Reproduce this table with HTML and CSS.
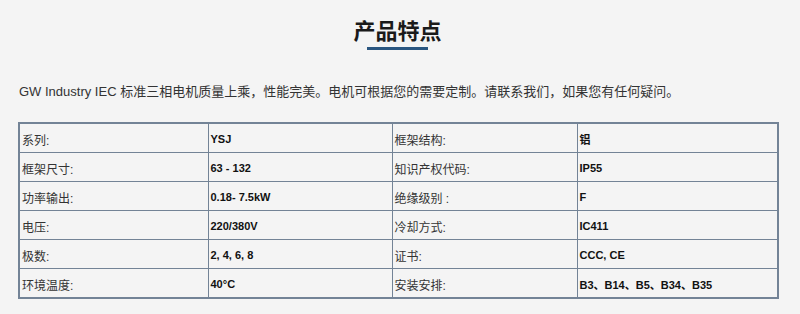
FILE: index.html
```html
<!DOCTYPE html>
<html lang="zh-CN">
<head>
<meta charset="utf-8">
<title>产品特点</title>
<link rel="stylesheet" href="styles.css">
</head>
<body>
<div class="page">
  <div class="head">
    <h2 class="title">产品特点</h2>
    <div class="bar"></div>
  </div>
  <p class="intro">GW Industry IEC 标准三相电机质量上乘，性能完美。电机可根据您的需要定制。请联系我们，如果您有任何疑问。</p>
  <table class="spec">
    <colgroup>
      <col class="c1"><col class="c2"><col class="c3"><col class="c4">
    </colgroup>
    <tr><td>系列:</td><td class="v">YSJ</td><td>框架结构:</td><td class="v">铝</td></tr>
    <tr><td>框架尺寸:</td><td class="v">63 - 132</td><td>知识产权代码:</td><td class="v">IP55</td></tr>
    <tr><td>功率输出:</td><td class="v">0.18- 7.5kW</td><td>绝缘级别 :</td><td class="v">F</td></tr>
    <tr><td>电压:</td><td class="v">220/380V</td><td>冷却方式:</td><td class="v">IC411</td></tr>
    <tr><td>极数:</td><td class="v">2, 4, 6, 8</td><td>证书:</td><td class="v">CCC, CE</td></tr>
    <tr><td>环境温度:</td><td class="v">40°C</td><td>安装安排:</td><td class="v">B3、B14、B5、B34、B35</td></tr>
  </table>
</div>
</body>
</html>
```
FILE: styles.css
```css
html, body {
  margin: 0;
  padding: 0;
  background: #f4f4f4;
}
body {
  font-family: "Liberation Sans", Arial, "Noto Sans CJK SC", sans-serif;
  color: #333;
}
.page {
  width: 795px;
  padding-top: 14px;
}
.head {
  display: flex;
  flex-direction: column;
  align-items: center;
}
.title {
  margin: 0;
  font-size: 22px;
  line-height: 30px;
  font-weight: bold;
  color: #1a1a1a;
  font-family: "Noto Sans CJK SC", sans-serif;
}
.bar {
  width: 61px;
  height: 3px;
  margin-top: 3px;
  background: #2a5680;
}
.intro {
  margin: 32px 0 0 19px;
  font-size: 13px;
  line-height: 20px;
  color: #333;
}
.spec {
  margin: 20px 0 0 18px;
  width: 759px;
  border-collapse: collapse;
  table-layout: fixed;
  font-size: 12px;
  border: 2px solid #738396;
}
.c1 { width: 189px; }
.c2 { width: 184px; }
.c3 { width: 185px; }
.c4 { width: 201px; }
.spec td {
  border: 1px solid #738396;
  height: 26px;
  padding: 2px 2px 0;
  color: #333;
}
.spec td.v {
  font-size: 11px;
  font-weight: bold;
  color: #111;
}
```
